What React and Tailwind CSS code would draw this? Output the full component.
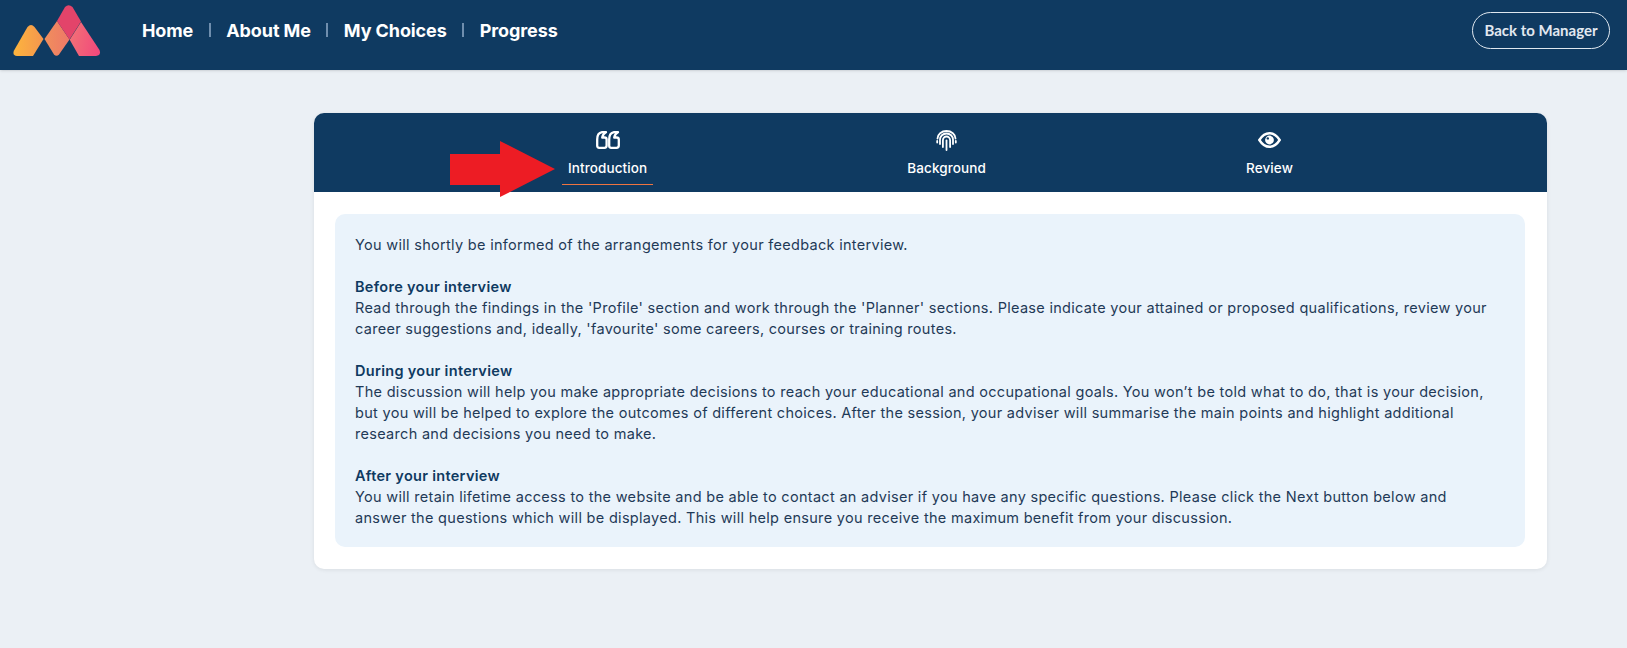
import React from "react";

const F = "font-['Inter','Noto_Sans',sans-serif]";

function Logo() {
  return (
    <svg width="88" height="52" viewBox="13 5 88 52" className="block mt-[2px]">
      <defs>
        <linearGradient id="gL" gradientUnits="userSpaceOnUse" x1="13" y1="40" x2="44" y2="40">
          <stop offset="0" stopColor="#fdb53d" />
          <stop offset="1" stopColor="#f4954f" />
        </linearGradient>
        <linearGradient id="gM" gradientUnits="userSpaceOnUse" x1="44" y1="38" x2="70" y2="38">
          <stop offset="0" stopColor="#f08f5c" />
          <stop offset="1" stopColor="#ee7868" />
        </linearGradient>
        <linearGradient id="gR" gradientUnits="userSpaceOnUse" x1="70" y1="38" x2="100" y2="44">
          <stop offset="0" stopColor="#f26f76" />
          <stop offset="1" stopColor="#f2497c" />
        </linearGradient>
      </defs>
      <path d="M27.5 27 Q31 23 34.5 27 L43.5 39 L33 56 L17 56 Q12 55.5 14 50.5Z" fill="url(#gL)" />
      <path d="M44.5 39 L57 21 L69.5 39.5 L59 54.5 Q56.5 57 54 54.5Z" fill="url(#gM)" />
      <path d="M57 21 L65 7 Q68.5 3.5 72.5 7 L81 21.5 L69.5 39.5Z" fill="#e3446a" />
      <path d="M81 22 L69.7 39.7 L79 56 L96 56 Q101.5 55.5 99.5 50Z" fill="url(#gR)" />
    </svg>
  );
}

function QuoteIcon() {
  return (
    <svg width="24" height="18" viewBox="0 0 24 18" fill="none" stroke="white" strokeWidth="2.3" strokeLinejoin="round" className="block">
      <path d="M1.2 8.5 Q1.2 2 6 1.2 L10 1.2 Q7 2.5 6.2 6.5 L8.5 6.5 Q10.6 6.5 10.6 8.5 L10.6 14.5 Q10.6 16.8 8.5 16.8 L3.2 16.8 Q1.2 16.8 1.2 14.8Z" />
      <path d="M13.2 8.5 Q13.2 2 18 1.2 L22 1.2 Q19 2.5 18.2 6.5 L20.5 6.5 Q22.8 6.5 22.8 8.5 L22.8 14.5 Q22.8 16.8 20.5 16.8 L15.2 16.8 Q13.2 16.8 13.2 14.8Z" />
    </svg>
  );
}

function FingerprintIcon() {
  return (
    <svg width="21" height="21" viewBox="0 0 21 21" fill="none" stroke="white" strokeWidth="1.8" strokeLinecap="round" className="block">
      <path d="M1.5 8.5 A9 7.5 0 0 1 19.5 8.5" />
      <path d="M1.2 11 V12.5 M19.8 11 V12.5" />
      <path d="M4 14 V9.5 A6.5 6 0 0 1 17 9.5 V14" />
      <path d="M6.9 17 V10.3 A3.6 3.8 0 0 1 14.1 10.3 V17" />
      <path d="M10.5 20 V10.5" />
    </svg>
  );
}

function EyeIcon() {
  return (
    <svg width="23" height="16" viewBox="0 0 23 16" className="block">
      <path d="M1.3 8 C4.5 3 8 1.2 11.5 1.2 S18.5 3 21.7 8 C18.5 13 15 14.8 11.5 14.8 S4.5 13 1.3 8Z" fill="none" stroke="white" strokeWidth="2.4" />
      <circle cx="11.5" cy="8" r="4.4" fill="white" />
      <circle cx="9.8" cy="6.4" r="1.2" fill="#0f3a61" />
    </svg>
  );
}

function Tab({ icon, label, active }) {
  return (
    <div className="flex flex-col items-center">
      <div className="h-[22px] flex items-center justify-center">{icon}</div>
      <div className="mt-[7px] px-[6px] pb-[6px] text-[13.5px] leading-[20px] font-medium tracking-[0.1px] text-white">
        {label}
      </div>
      <div className={`h-px self-stretch ${active ? "bg-[#ee7440]" : "bg-transparent"}`} />
    </div>
  );
}

function Sep() {
  return <span className="w-[2px] h-[14px] bg-[#6f8eae] mx-[15.5px]" />;
}

function Heading({ children }) {
  return <p className="font-semibold text-[#0f3a61]">{children}</p>;
}

export default function App() {
  return (
    <div className={`min-h-[648px] bg-[#ebf0f5] ${F}`}>
      <header className="h-[70px] bg-[#0f3a61] flex items-center justify-between pl-[13px] pr-[17px] pb-[10px] shadow-sm">
        <div className="flex items-center">
          <Logo />
          <nav className="ml-[41px] flex items-center text-white font-bold text-[18px] tracking-[-0.1px]">
            <span>Home</span><Sep /><span>About Me</span><Sep /><span>My Choices</span><Sep /><span>Progress</span>
          </nav>
        </div>
        <button className="h-[37px] w-[138px] rounded-full border border-[#dfe7ef] text-[#e2e8f0] text-[15px] font-bold font-['Lato',sans-serif]">
          Back to Manager
        </button>
      </header>
      <main className="pt-[43px] pl-[314px] pr-[80px]">
        <div className="relative bg-white rounded-[10px] shadow-[0_1px_4px_rgba(0,0,0,0.08)]">
          <div className="h-[79px] bg-[#0f3a61] rounded-t-[10px] flex justify-evenly items-start pt-[16px]">
            <Tab active icon={<QuoteIcon />} label="Introduction" />
            <Tab icon={<FingerprintIcon />} label="Background" />
            <Tab icon={<EyeIcon />} label="Review" />
          </div>
          <svg width="105" height="56" viewBox="0 0 105 56" className="absolute left-[136px] top-[28px]">
            <path d="M0 13 H50 V0 L105 28 L50 56 V44 H0Z" fill="#ed1c24" />
          </svg>
          <div className="pl-[21px] pr-[22px] py-[22px]">
            <div className="bg-[#eaf3fb] rounded-[10px] pl-[20px] pr-[30px] pt-[20px] pb-[19px] text-[14.5px] leading-[21px] tracking-[0.3px] text-[#1f3a57]">
              <p>You will shortly be informed of the arrangements for your feedback interview.</p>
              <br />
              <Heading>Before your interview</Heading>
              <p>Read through the findings in the 'Profile' section and work through the 'Planner' sections. Please indicate your attained or proposed qualifications, review your career suggestions and, ideally, 'favourite' some careers, courses or training routes.</p>
              <br />
              <Heading>During your interview</Heading>
              <p>The discussion will help you make appropriate decisions to reach your educational and occupational goals. You won’t be told what to do, that is your decision, but you will be helped to explore the outcomes of different choices. After the session, your adviser will summarise the main points and highlight additional research and decisions you need to make.</p>
              <br />
              <Heading>After your interview</Heading>
              <p>You will retain lifetime access to the website and be able to contact an adviser if you have any specific questions. Please click the Next button below and answer the questions which will be displayed. This will help ensure you receive the maximum benefit from your discussion.</p>
            </div>
          </div>
        </div>
      </main>
    </div>
  );
}
